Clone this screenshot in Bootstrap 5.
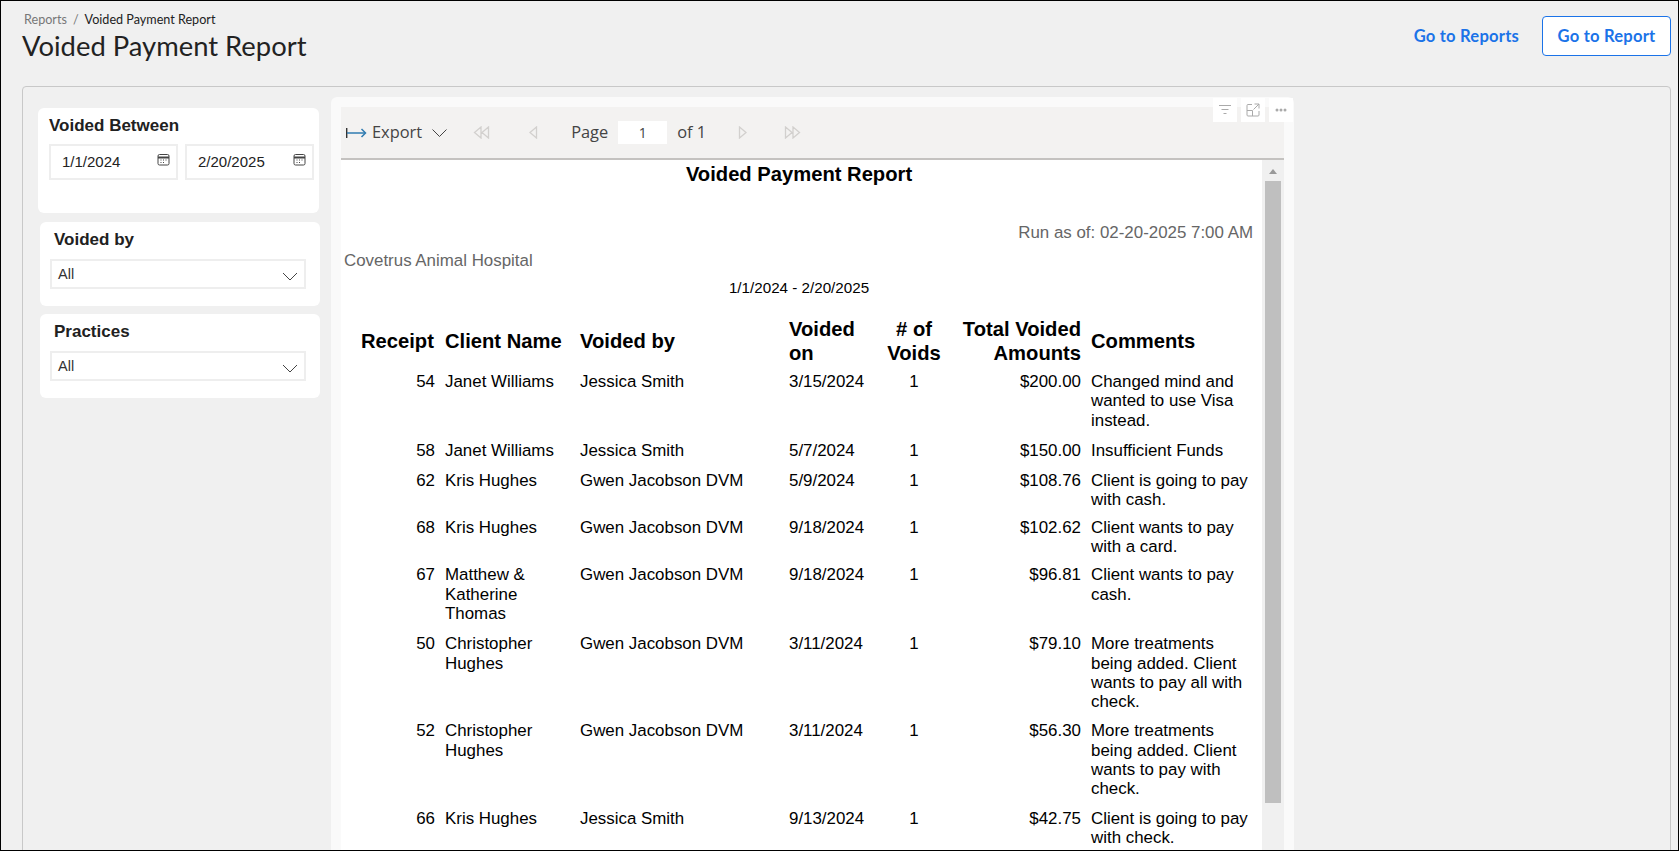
<!DOCTYPE html>
<html lang="en">
<head>
<meta charset="utf-8">
<title>Voided Payment Report</title>
<link href="https://cdn.jsdelivr.net/npm/bootstrap@5.3.0/dist/css/bootstrap.min.css" rel="stylesheet">
<style>
html,body{height:851px;overflow:hidden;background:#f0f0f0}
body{font-family:"Liberation Sans",Arial,sans-serif;color:#212529}
.shell{height:851px;border:1px solid #000;overflow:hidden;padding:0 7px 0 21px;background:#f0f0f0}
.head-row{height:85px;padding-top:11px}
.crumbs{font-family:Lato,sans-serif;font-size:12.6px;line-height:14px;margin:1px 0 0 2px;color:#222}
.crumbs .breadcrumb{margin:0;--bs-breadcrumb-divider-color:#777;--bs-breadcrumb-item-padding-x:6px;--bs-breadcrumb-font-size:12.6px}
.crumbs .breadcrumb-item a{color:#777;text-decoration:none}
.crumbs .breadcrumb-item.active{color:#222}
.page-title{font-family:Lato,sans-serif;font-weight:400;font-size:27.4px;line-height:34px;margin:2px 0 0 0;color:#222}
.head-btn{font-family:Lato,sans-serif;font-weight:700;font-size:16.6px;letter-spacing:.2px;color:#1b73e8;--bs-btn-border-radius:4px}
.go-link{padding:0;text-decoration:none;margin:4px 23px 0 0;height:40px;line-height:40px;border:0}
.go-btn{width:129px;height:40px;padding:0;background:#fff;border:1px solid #1b73e8;line-height:38px;margin-top:4px}
.outer-panel{height:800px;border:1px solid #c8c8c8;border-radius:4px;padding:10px 0 0 15px;display:flex;align-items:flex-start}
.filters{width:284px;flex:none;padding-top:11px}
.flt-card{background:#fff;border-radius:6px}
.flt-a{width:281px;height:105px;padding:8px 0 0 11px}
.flt-b{width:280px;height:84px;margin:9px 0 0 2px;padding:8px 0 0 10px}
.flt-c{margin-top:8px}
.flt-label{font-weight:700;font-size:17px;line-height:19px;color:#212121;margin:0}
.flt-a .flt-label{margin-bottom:9px}
.flt-b .flt-label{margin:0 0 10px 4px}
.date-box{width:129px;height:36px;padding:0 0 0 11px;border:2px solid #eee;border-radius:0;font-size:15px;line-height:32px;color:#222;position:relative}
.sel-box{width:256px;height:30px;padding:0 0 0 6px;border:2px solid #eee;border-radius:0;font-size:14.5px;line-height:26px;color:#333;position:relative}
.cal-ico{position:absolute;right:6px;top:7px;width:13px;height:13px}
.chev-ico{position:absolute;right:6px;top:11px;width:16px;height:9px}
.report-frame{width:963px;height:800px;margin-left:9px;background:#fafafa;border-radius:6px;padding:10px 10px 0 10px;position:relative;flex:none}
.vis-btns{position:absolute;right:1px;top:1px;display:flex;gap:4px}
.vis-btn{width:24px;height:24px;background:#fff;display:flex;align-items:center;justify-content:center}
.tool-bar{height:53px;background:#f3f2f1;border-bottom:2px solid #c4c2c0;display:flex;align-items:center;font-family:"Open Sans",sans-serif;font-size:16.4px;color:#444}
.exp-ico{margin-left:5px;margin-right:5px}
.exp-chev{margin-left:10px}
.pg-ico{flex:none}
.pg-first{margin-left:26px}
.pg-prev{margin-left:39px}
.pg-word{margin-left:33px}
.pg-next{margin-left:32px}
.pg-last{margin-left:37px}
.pg-input{width:49px;height:23px;background:#fff;text-align:center;font-size:14px;line-height:23px;margin:0 10px}
.report-view{height:690px;background:#fff;display:flex;overflow:hidden}
.report-body{width:921px;flex:none;color:#000;padding-top:1px}
.rep-title{font-weight:700;font-size:20.2px;line-height:26px;text-align:center;width:916px;margin:0}
.rep-run{color:#666;font-size:16.9px;line-height:20px;text-align:right;width:912px;margin:36px 0 0 0}
.rep-prac{color:#666;font-size:16.9px;line-height:20px;margin:8px 0 0 3px}
.rep-range{font-size:15.2px;line-height:18px;text-align:center;width:916px;margin:8px 0 0 0}
.rep-table{table-layout:fixed;width:905px;margin:21px 0 0 15px;border-collapse:collapse;font-size:16.9px;line-height:19.3px}
.rep-table th{font-size:20.2px;line-height:23.5px;font-weight:700;padding:0 5px 7px;vertical-align:middle}
.rep-table td{padding:0 5px 10px;vertical-align:top}
.rep-table th.num,.rep-table td.num{text-align:right}
.rep-table th:first-child{padding-right:7px}
.rep-table th.mid,.rep-table td.mid{text-align:center}
.rep-table tbody tr:nth-child(1) td,.rep-table tbody tr:nth-child(2) td,.rep-table tbody tr:nth-child(5) td{padding-bottom:11px}
.rep-table tbody tr:nth-child(3) td{padding-bottom:8px}
.rep-table tbody tr:nth-child(4) td{padding-bottom:9px}
.sbar{width:22px;flex:none;background:#f0f0f0;position:relative}
.sbar-up{position:absolute;left:7px;top:9px;width:0;height:0;border-left:4px solid transparent;border-right:4px solid transparent;border-bottom:5px solid #999}
.sbar-thumb{position:absolute;left:3px;right:3px;top:21px;height:622px;background:#bfbfbf}
</style>
</head>
<body>
<div class="shell">
  <div class="head-row d-flex justify-content-between align-items-start">
    <div>
      <nav class="crumbs" aria-label="breadcrumb">
        <ol class="breadcrumb">
          <li class="breadcrumb-item"><a href="#">Reports</a></li>
          <li class="breadcrumb-item active" aria-current="page">Voided Payment Report</li>
        </ol>
      </nav>
      <h1 class="page-title">Voided Payment Report</h1>
    </div>
    <div class="d-flex align-items-start">
      <a href="#" class="btn head-btn go-link">Go to Reports</a>
      <a href="#" class="btn head-btn go-btn">Go to Report</a>
    </div>
  </div>
  <div class="outer-panel">
    <div class="filters">
      <div class="flt-card flt-a">
        <div class="flt-label">Voided Between</div>
        <div class="d-flex" style="gap:7px">
          <div class="form-control date-box">1/1/2024
            <svg class="cal-ico" viewBox="0 0 13 13" fill="none" stroke="#444"><rect x="1" y="1.5" width="11" height="10.5" rx="1.5"/><path d="M1 4.5h11" stroke-width="2"/><path d="M3.5 7h1M6 7h1M8.500 7h1M3.500 9.500h1M6 9.500h1" stroke-width="1"/></svg>
          </div>
          <div class="form-control date-box">2/20/2025
            <svg class="cal-ico" viewBox="0 0 13 13" fill="none" stroke="#444"><rect x="1" y="1.5" width="11" height="10.5" rx="1.5"/><path d="M1 4.5h11" stroke-width="2"/><path d="M3.5 7h1M6 7h1M8.500 7h1M3.500 9.500h1M6 9.500h1" stroke-width="1"/></svg>
          </div>
        </div>
      </div>
      <div class="flt-card flt-b">
        <div class="flt-label">Voided by</div>
        <div class="form-control sel-box">All
          <svg class="chev-ico" viewBox="0 0 16 9" fill="none" stroke="#444"><path d="M1 1l7 7 7-7"/></svg>
        </div>
      </div>
      <div class="flt-card flt-b flt-c">
        <div class="flt-label">Practices</div>
        <div class="form-control sel-box">All
          <svg class="chev-ico" viewBox="0 0 16 9" fill="none" stroke="#444"><path d="M1 1l7 7 7-7"/></svg>
        </div>
      </div>
    </div>
    <div class="report-frame">
      <div class="vis-btns">
        <div class="vis-btn"><svg width="14" height="12" viewBox="0 0 14 12" fill="none" stroke="#aaa"><path d="M1 1.500h12M3.500 5.500h7M5.500 9.500h3"/></svg></div>
        <div class="vis-btn"><svg width="14" height="14" viewBox="0 0 14 14" fill="none" stroke="#aaa"><path d="M6 1.500H2a1 1 0 0 0-1 1V12a1 1 0 0 0 1 1h10a1 1 0 0 0 1-1V8M1 7.500h5.500V13M8.500 1h4.500v4.500M13 1L7.500 6.500"/></svg></div>
        <div class="vis-btn"><svg width="12" height="4" viewBox="0 0 12 4" fill="#aaa"><circle cx="2" cy="2" r="1.500"/><circle cx="6" cy="2" r="1.500"/><circle cx="10" cy="2" r="1.500"/></svg></div>
      </div>
      <div class="tool-bar">
        <svg class="exp-ico" width="21" height="10" viewBox="0 0 21 10" fill="none"><path d="M.7 0v10" stroke="#333" stroke-width="1.400"/><path d="M1 5h18" stroke="#2f7bb0" stroke-width="1.500"/><path d="M15.500 1l4 4-4 4" stroke="#2f7bb0" stroke-width="1.500"/></svg>
        <span>Export</span>
        <svg class="exp-chev" width="15" height="8" viewBox="0 0 15 8" fill="none" stroke="#444"><path d="M.5.500l7 7 7-7"/></svg>
        <svg class="pg-ico pg-first" width="17" height="13" viewBox="0 0 17 13" fill="none" stroke="#d2d0ce" stroke-width="1.300"><path d="M8 1L1.500 6.500 8 12zM15.500 1L9 6.500 15.500 12z"/></svg>
        <svg class="pg-ico pg-prev" width="9" height="13" viewBox="0 0 9 13" fill="none" stroke="#d2d0ce" stroke-width="1.300"><path d="M7.500 1L1 6.500 7.500 12z"/></svg>
        <span class="pg-word">Page</span>
        <span class="pg-input">1</span>
        <span>of 1</span>
        <svg class="pg-ico pg-next" width="9" height="13" viewBox="0 0 9 13" fill="none" stroke="#d2d0ce" stroke-width="1.300"><path d="M1.500 1L8 6.500 1.500 12z"/></svg>
        <svg class="pg-ico pg-last" width="17" height="13" viewBox="0 0 17 13" fill="none" stroke="#d2d0ce" stroke-width="1.300"><path d="M1.500 1L8 6.500 1.500 12zM9 1l6.500 5.500L9 12z"/></svg>
      </div>
      <div class="report-view">
        <div class="report-body">
          <p class="rep-title">Voided Payment Report</p>
          <p class="rep-run">Run as of: 02-20-2025 7:00 AM</p>
          <p class="rep-prac">Covetrus Animal Hospital</p>
          <p class="rep-range">1/1/2024 - 2/20/2025</p>
          <table class="rep-table">
            <colgroup><col style="width:84px"><col style="width:135px"><col style="width:209px"><col style="width:92px"><col style="width:76px"><col style="width:134px"><col style="width:175px"></colgroup>
            <thead>
              <tr><th class="num">Receipt</th><th>Client Name</th><th>Voided by</th><th>Voided on</th><th class="mid"># of Voids</th><th class="num">Total Voided Amounts</th><th>Comments</th></tr>
            </thead>
            <tbody>
              <tr><td class="num">54</td><td>Janet Williams</td><td>Jessica Smith</td><td>3/15/2024</td><td class="mid">1</td><td class="num">$200.00</td><td>Changed mind and wanted to use Visa instead.</td></tr>
              <tr><td class="num">58</td><td>Janet Williams</td><td>Jessica Smith</td><td>5/7/2024</td><td class="mid">1</td><td class="num">$150.00</td><td>Insufficient Funds</td></tr>
              <tr><td class="num">62</td><td>Kris Hughes</td><td>Gwen Jacobson DVM</td><td>5/9/2024</td><td class="mid">1</td><td class="num">$108.76</td><td>Client is going to pay with cash.</td></tr>
              <tr><td class="num">68</td><td>Kris Hughes</td><td>Gwen Jacobson DVM</td><td>9/18/2024</td><td class="mid">1</td><td class="num">$102.62</td><td>Client wants to pay with a card.</td></tr>
              <tr><td class="num">67</td><td>Matthew &amp; Katherine Thomas</td><td>Gwen Jacobson DVM</td><td>9/18/2024</td><td class="mid">1</td><td class="num">$96.81</td><td>Client wants to pay cash.</td></tr>
              <tr><td class="num">50</td><td>Christopher Hughes</td><td>Gwen Jacobson DVM</td><td>3/11/2024</td><td class="mid">1</td><td class="num">$79.10</td><td>More treatments being added. Client wants to pay all with check.</td></tr>
              <tr><td class="num">52</td><td>Christopher Hughes</td><td>Gwen Jacobson DVM</td><td>3/11/2024</td><td class="mid">1</td><td class="num">$56.30</td><td>More treatments being added. Client wants to pay with check.</td></tr>
              <tr><td class="num">66</td><td>Kris Hughes</td><td>Jessica Smith</td><td>9/13/2024</td><td class="mid">1</td><td class="num">$42.75</td><td>Client is going to pay with check.</td></tr>
            </tbody>
          </table>
        </div>
        <div class="sbar"><div class="sbar-up"></div><div class="sbar-thumb"></div></div>
      </div>
    </div>
  </div>
</div>
<script src="https://cdn.jsdelivr.net/npm/bootstrap@5.3.0/dist/js/bootstrap.bundle.min.js"></script>
</body>
</html>
